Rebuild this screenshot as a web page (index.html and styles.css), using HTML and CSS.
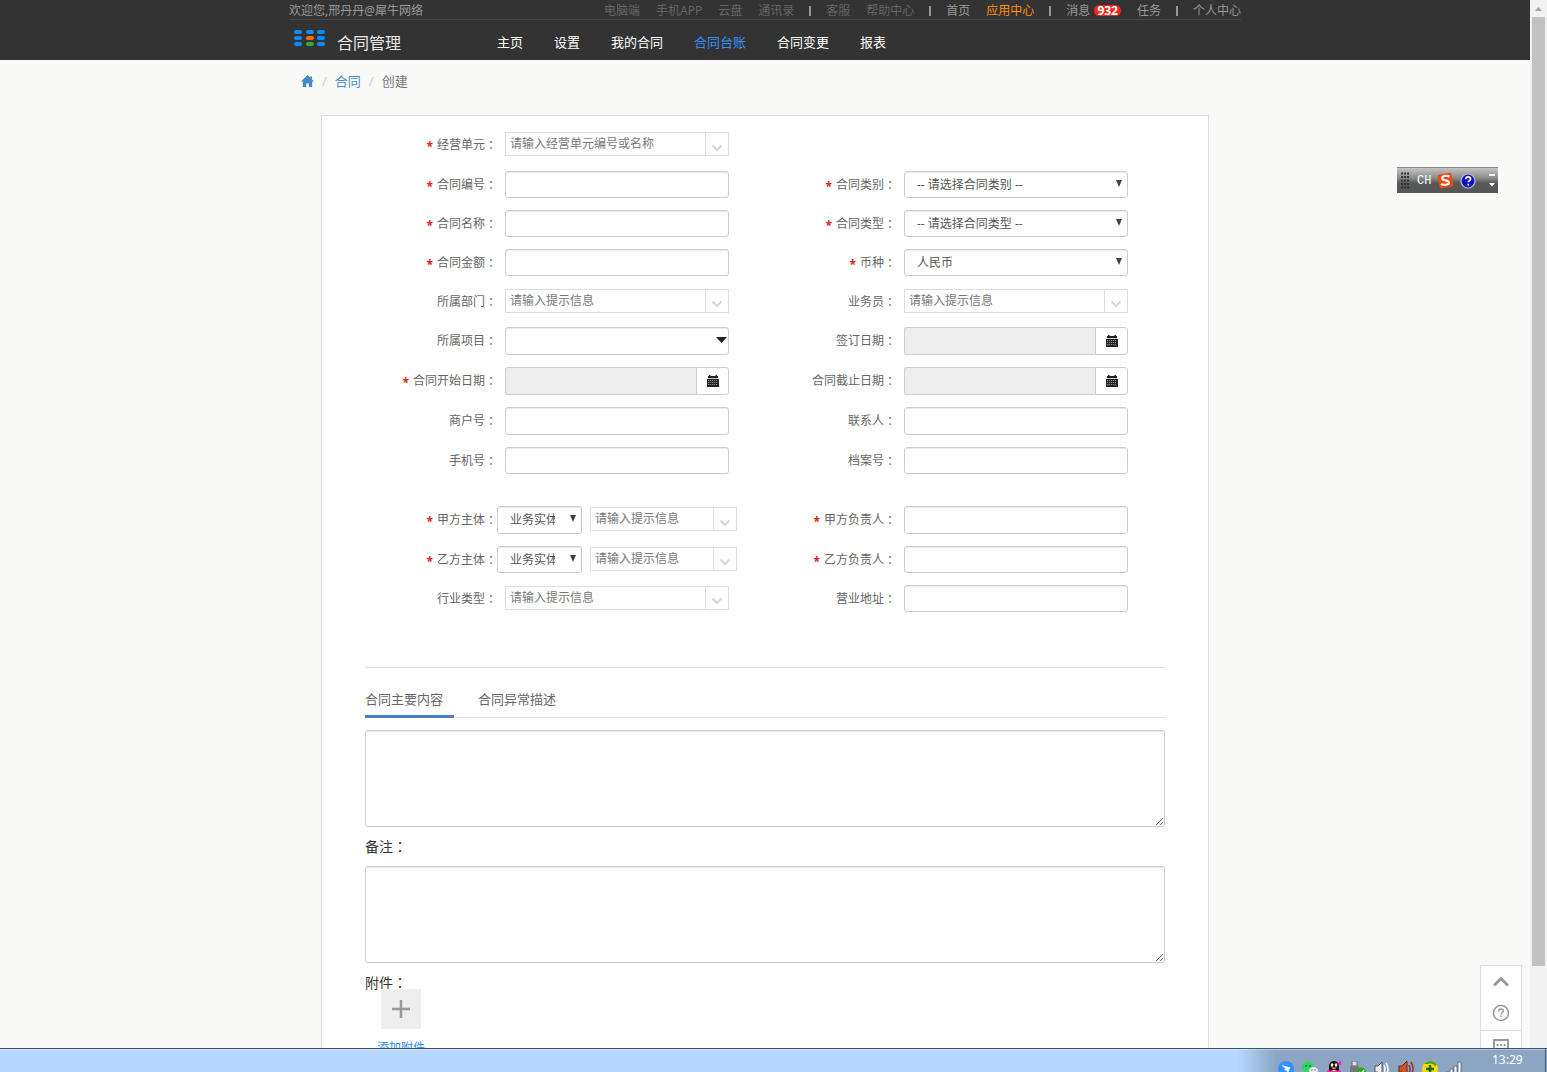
FILE: index.html
```html
<!DOCTYPE html>
<html lang="zh-CN">
<head>
<meta charset="utf-8">
<title>合同管理</title>
<link rel="stylesheet" href="styles.css">
</head>
<body>
<svg class="defs" aria-hidden="true">
  <symbol id="chevron" viewBox="0 0 12 8"><path d="M1.500 1.500 6 6l4.500-4.500" fill="none" stroke="#d5d5d5" stroke-width="2"/></symbol>
  <symbol id="calendar" viewBox="0 0 12 12"><path d="M1 1h1V0h1.500v1h5V0H10v1h1v2.300H1z" fill="#222"/><path d="M0 4h12v8H0z" fill="#222"/><path d="M1 5.500h10M1 7.500h10M1 9.500h10" stroke="#aaa" stroke-width=".8" stroke-dasharray="1.200 .8"/></symbol>
</svg>
<div class="window">
  <div class="page">
    <header class="header">
      <div class="topbar wrap">
        <span class="welcome">欢迎您,邢丹丹@犀牛网络</span>
        <div class="toplinks">
          <a class="dim" href="#">电脑端</a><a class="dim" href="#">手机APP</a><a class="dim" href="#">云盘</a><a class="dim" href="#">通讯录</a>
          <i class="bar"></i>
          <a class="dim" href="#">客服</a><a class="dim" href="#">帮助中心</a>
          <i class="bar"></i>
          <a href="#">首页</a><a class="hot" href="#">应用中心</a>
          <i class="bar"></i>
          <a class="messages" href="#">消息<span class="badge">932</span></a><a href="#">任务</a>
          <i class="bar"></i>
          <a href="#">个人中心</a>
        </div>
      </div>
      <div class="mainbar wrap">
        <a class="brand" href="#">
          <svg width="32" height="17" viewBox="0 0 32 17" fill="#0a8cff">
            <rect x="0" y="0" width="8" height="4" rx="2"/><rect x="12" y="0" width="8" height="4" rx="2"/><rect x="23" y="0" width="8" height="4" rx="2"/>
            <rect x="0" y="6" width="8" height="4" rx="2"/><rect x="12" y="6" width="8" height="4" rx="2" fill="#ff6a00"/><rect x="23" y="6" width="8" height="4" rx="2"/>
            <rect x="0" y="12" width="8" height="4" rx="2"/><rect x="12" y="12" width="8" height="4" rx="2" fill="#2fae3a"/><rect x="23" y="12" width="8" height="4" rx="2"/>
          </svg>
          <span>合同管理</span>
        </a>
        <nav class="nav">
          <a href="#">主页</a><a href="#">设置</a><a href="#">我的合同</a><a class="current" href="#">合同台账</a><a href="#">合同变更</a><a href="#">报表</a>
        </nav>
      </div>
    </header>

    <nav class="crumbs wrap" aria-label="路径">
      <a href="#" aria-label="首页"><svg width="13" height="12" viewBox="0 0 13 12"><path d="M6.500 0 0 6.500h1.800V12h3.400V8.500h2.600V12h3.400V6.500H13L11 4.500V1.500H9.300v1.300z" fill="#428bca"/></svg></a>
      <i>/</i><a href="#">合同</a><i>/</i><span>创建</span>
    </nav>

    <form class="panel">
      <div class="row tall">
        <label for="unit"><b>*</b>经营单元<span class="colon">：</span></label>
        <div class="field combo"><input id="unit" placeholder="请输入经营单元编号或名称"><button type="button" aria-label="展开"><svg width="12" height="8"><use href="#chevron"/></svg></button></div>
      </div>
      <div class="row">
        <label for="no"><b>*</b>合同编号<span class="colon">：</span></label>
        <div class="field"><input class="text" id="no"></div>
        <label for="cat"><b>*</b>合同类别<span class="colon">：</span></label>
        <div class="field select"><select id="cat"><option>-- 请选择合同类别 --</option></select></div>
      </div>
      <div class="row">
        <label for="name"><b>*</b>合同名称<span class="colon">：</span></label>
        <div class="field"><input class="text" id="name"></div>
        <label for="type"><b>*</b>合同类型<span class="colon">：</span></label>
        <div class="field select"><select id="type"><option>-- 请选择合同类型 --</option></select></div>
      </div>
      <div class="row">
        <label for="amount"><b>*</b>合同金额<span class="colon">：</span></label>
        <div class="field"><input class="text" id="amount"></div>
        <label for="currency"><b>*</b>币种<span class="colon">：</span></label>
        <div class="field select"><select id="currency"><option>人民币</option></select></div>
      </div>
      <div class="row">
        <label for="dept">所属部门<span class="colon">：</span></label>
        <div class="field combo"><input id="dept" placeholder="请输入提示信息"><button type="button" aria-label="展开"><svg width="12" height="8"><use href="#chevron"/></svg></button></div>
        <label for="sales">业务员<span class="colon">：</span></label>
        <div class="field combo"><input id="sales" placeholder="请输入提示信息"><button type="button" aria-label="展开"><svg width="12" height="8"><use href="#chevron"/></svg></button></div>
      </div>
      <div class="row tall">
        <label for="project">所属项目<span class="colon">：</span></label>
        <div class="field select wide"><select id="project"><option></option></select></div>
        <label for="sign">签订日期<span class="colon">：</span></label>
        <div class="field date"><input id="sign" readonly><button type="button" aria-label="选择日期"><svg width="12" height="12"><use href="#calendar"/></svg></button></div>
      </div>
      <div class="row tall">
        <label for="start"><b>*</b>合同开始日期<span class="colon">：</span></label>
        <div class="field date"><input id="start" readonly><button type="button" aria-label="选择日期"><svg width="12" height="12"><use href="#calendar"/></svg></button></div>
        <label for="end">合同截止日期<span class="colon">：</span></label>
        <div class="field date"><input id="end" readonly><button type="button" aria-label="选择日期"><svg width="12" height="12"><use href="#calendar"/></svg></button></div>
      </div>
      <div class="row tall">
        <label for="merchant">商户号<span class="colon">：</span></label>
        <div class="field"><input class="text" id="merchant"></div>
        <label for="contact">联系人<span class="colon">：</span></label>
        <div class="field"><input class="text" id="contact"></div>
      </div>
      <div class="row">
        <label for="mobile">手机号<span class="colon">：</span></label>
        <div class="field"><input class="text" id="mobile"></div>
        <label for="file">档案号<span class="colon">：</span></label>
        <div class="field"><input class="text" id="file"></div>
      </div>

      <div class="row tall parties">
        <label for="pa"><b>*</b>甲方主体<span class="colon">：</span></label>
        <div class="pair">
          <div class="select"><select aria-label="甲方类别"><option>业务实体</option></select></div>
          <div class="combo"><input id="pa" placeholder="请输入提示信息"><button type="button" aria-label="展开"><svg width="12" height="8"><use href="#chevron"/></svg></button></div>
        </div>
        <label for="pam"><b>*</b>甲方负责人<span class="colon">：</span></label>
        <div class="field"><input class="text" id="pam"></div>
      </div>
      <div class="row">
        <label for="pb"><b>*</b>乙方主体<span class="colon">：</span></label>
        <div class="pair">
          <div class="select"><select aria-label="乙方类别"><option>业务实体</option></select></div>
          <div class="combo"><input id="pb" placeholder="请输入提示信息"><button type="button" aria-label="展开"><svg width="12" height="8"><use href="#chevron"/></svg></button></div>
        </div>
        <label for="pbm"><b>*</b>乙方负责人<span class="colon">：</span></label>
        <div class="field"><input class="text" id="pbm"></div>
      </div>
      <div class="row">
        <label for="industry">行业类型<span class="colon">：</span></label>
        <div class="field combo"><input id="industry" placeholder="请输入提示信息"><button type="button" aria-label="展开"><svg width="12" height="8"><use href="#chevron"/></svg></button></div>
        <label for="addr">营业地址<span class="colon">：</span></label>
        <div class="field"><input class="text" id="addr"></div>
      </div>

      <section class="details">
        <div class="tabs">
          <button type="button" class="tab on">合同主要内容</button>
          <button type="button" class="tab">合同异常描述</button>
        </div>
        <textarea aria-label="合同主要内容"></textarea>
        <label class="heading" for="remark">备注<span class="colon">：</span></label>
        <textarea id="remark"></textarea>
        <p class="heading files">附件<span class="colon">：</span></p>
        <div class="upload">
          <button type="button" aria-label="添加"><svg width="20" height="20" viewBox="0 0 20 20"><path d="M10 1v18M1 10h18" stroke="#999" stroke-width="2.500"/></svg></button>
          <a href="#">添加附件</a>
        </div>
      </section>
    </form>
  </div>

  <div class="scrollbar" aria-hidden="true">
    <svg width="17" height="17" viewBox="0 0 17 17"><path d="M5 11h7L8.500 7z" fill="#a3a3a3"/></svg>
    <div class="thumb"></div>
  </div>
</div>

<div class="ime">
  <svg width="10" height="18" viewBox="0 0 10 18"><path d="M1 1.500h8M1 5h8M1 8.500h8M1 12h8M1 15.500h8" stroke="#333" stroke-width="2" stroke-dasharray="2 1"/></svg>
  <span>CH</span>
  <svg width="17" height="17" viewBox="0 0 17 17"><rect x="1.500" y="1.500" width="14" height="14" rx="2" fill="#f4470f" transform="rotate(-10 8.500 8.500)"/><path d="M12.500 4.500C9 3 5 4 5 6.200 5 8.800 12 7.800 12 10.600c0 2.500-5 2.800-8 1.500" fill="none" stroke="#fff" stroke-width="2.200"/></svg>
  <svg width="16" height="16" viewBox="0 0 16 16"><circle cx="8" cy="8" r="7" fill="#1212c8" stroke="#b9bcc8" stroke-width="1.200"/><path d="M5.700 6.200C5.700 3 10.500 3.200 10.500 6c0 1.700-2.300 1.700-2.300 3.300M8.200 10.700v1.800" fill="none" stroke="#fff" stroke-width="1.700"/></svg>
  <svg width="6" height="13" viewBox="0 0 6 13" fill="#fff"><path d="M0 0h6v2H0zM0 9h6l-3 3.500z"/></svg>
</div>

<div class="float">
  <button type="button" aria-label="返回顶部"><svg width="16" height="11" viewBox="0 0 16 11"><path d="M1 9.500 8 2.500l7 7" fill="none" stroke="#999" stroke-width="3"/></svg></button>
  <button type="button" aria-label="帮助"><svg width="18" height="18" viewBox="0 0 18 18" fill="none" stroke="#999"><circle cx="9" cy="9" r="7.500" stroke-width="1.500"/><path d="M6.500 7.500c0-3.500 5-3.200 5-.5 0 1.700-2.500 1.800-2.500 3.500M9 11.500V13" stroke-width="1.500"/></svg></button>
  <button type="button" class="chat" aria-label="反馈"><svg width="18" height="16" viewBox="0 0 18 16"><path d="M2 2h14v10H8l-3 3v-3H2z" fill="none" stroke="#999" stroke-width="2"/><path d="M4.500 7h2M8 7h2M11.500 7h2" stroke="#999" stroke-width="2"/></svg></button>
</div>

<footer class="taskbar">
  <div class="tray">
    <svg width="16" height="16" viewBox="0 0 16 16"><circle cx="8" cy="8" r="8" fill="#2f93ff"/><path d="M3.500 4 12.500 6.500 10 12 8.800 9.800 6 9l1.500-1z" fill="#fff"/></svg>
    <svg width="16" height="16" viewBox="0 0 16 16"><ellipse cx="6" cy="6" rx="6" ry="5.500" fill="#2fd566"/><path d="M2 9v4l4-2z" fill="#2fd566"/><circle cx="4" cy="5" r="1" fill="#186b34"/><circle cx="8" cy="5" r="1" fill="#186b34"/><ellipse cx="11.500" cy="10" rx="4.500" ry="4" fill="#e7efe9"/><circle cx="10" cy="9" r=".7" fill="#567"/><circle cx="13" cy="9" r=".7" fill="#567"/></svg>
    <svg width="16" height="16" viewBox="0 0 16 16"><path d="M3 9V5a5 5 0 0 1 10 0v4l2 4H1z" fill="#111"/><ellipse cx="6" cy="4" rx="1.300" ry="1.700" fill="#fff"/><ellipse cx="10" cy="4" rx="1.300" ry="1.700" fill="#fff"/><path d="M5 6.500h6L8 8.500z" fill="#ffae00"/><ellipse cx="8" cy="13" rx="4" ry="4" fill="#fff"/><path d="M2 8.500c4 2 8 2 12 0l1 2.500H1z" fill="#ff1db0"/><path d="m10 0 2 1 3-1v4l-3-1z" fill="#ff1dc0"/></svg>
    <svg width="16" height="16" viewBox="0 0 16 16"><path d="M2 0h5v5H2z" fill="#ddd" stroke="#666"/><path d="M0 5h9v11H0z" fill="#777"/><circle cx="11.500" cy="11" r="4.500" fill="#27a51f"/><path d="m9 11 2 2 3-4" fill="none" stroke="#fff" stroke-width="1.500"/></svg>
    <svg width="16" height="16" viewBox="0 0 16 16"><path d="M1 5h3l4-4v14l-4-4H1z" fill="#eee" stroke="#555"/><path d="M10 4q2 4 0 8M12 2q4 6 0 12" fill="none" stroke="#fff" stroke-width="1.500"/></svg>
    <svg width="16" height="16" viewBox="0 0 16 16"><path d="M1 5h3l5-5v15l-5-4H1z" fill="#d0532d" stroke="#6d2a1a"/><path d="M11 4q2 4 0 8M13 1q4 6 0 13" fill="none" stroke="#8f3326" stroke-width="1.500"/></svg>
    <svg width="16" height="16" viewBox="0 0 16 16"><circle cx="8" cy="8" r="8" fill="#ffd800"/><path d="M2 3a8 8 0 0 1 13 1L13 5a6 6 0 0 0-7-2z" fill="#43a62b"/><path d="M8 4v8M4 8h8" stroke="#176b1c" stroke-width="2.500"/></svg>
    <svg width="16" height="16" viewBox="0 0 16 16" fill="#fff" stroke="#4b5b6c" stroke-width=".8"><path d="M0 11h3v5H0zM4 8h3v8H4zM8 5h3v11H8zM12 1h3v15h-3z"/></svg>
  </div>
  <time>13:29</time>
  <button type="button" class="peek" aria-label="显示桌面"></button>
</footer>
</body>
</html>
```
FILE: styles.css
```css
* { box-sizing: border-box; }

body {
  margin: 0;
  height: 100vh;
  overflow: hidden;
  background: #f9f9f7;
  color: #666;
  font: 12px/18px "Noto Sans", "Noto Sans CJK SC", sans-serif;
}

a { color: inherit; text-decoration: none; }
i { font-style: normal; }
svg { display: block; flex: none; }
button, input, select, textarea { font: inherit; color: inherit; margin: 0; outline: none; }
button { padding: 0; border: 0; background: none; }
.defs { display: none; }

.window { display: flex; height: 100%; }
.page { flex: 1; min-width: 0; overflow: hidden; }
.wrap { width: 100%; max-width: 952px; margin: 0 auto; }

/* header */
.header { height: 60px; background: #333; }
.topbar {
  display: flex;
  justify-content: space-between;
  height: 20px;
  padding-top: 2px;
  border-bottom: 1px solid #484848;
  color: #999;
}
.toplinks { display: flex; align-items: center; gap: 16px; }
.toplinks .dim { color: #666; }
.toplinks .hot { color: #ff8f0e; }
.bar { width: 2px; height: 10px; margin: 0 -1px; background: #999; }
.messages { display: flex; align-items: center; gap: 4px; }
.badge {
  height: 11px;
  padding: 0 3px;
  border-radius: 6px;
  background: #f0281c;
  color: #fff;
  font-weight: bold;
  line-height: 11px;
}
.mainbar { display: flex; align-items: center; height: 40px; padding: 3px 0 0 5px; }
.brand {
  display: flex;
  align-items: center;
  gap: 11px;
  width: 203px;
  color: #e8e8e8;
  font-size: 16px;
}
.brand svg { margin-bottom: 6px; }
.brand span { padding-top: 2px; }
.nav { display: flex; gap: 31px; color: #fff; font-size: 13px; }
.nav .current { color: #3a8ff5; }

/* breadcrumb */
.crumbs {
  display: flex;
  align-items: center;
  gap: 8px;
  height: 41px;
  padding-left: 12px;
  font-size: 13px;
  color: #777;
}
.crumbs a { color: #428bca; }
.crumbs i { color: #ccc; }

/* form */
.panel {
  width: 100%;
  max-width: 888px;
  min-height: 1000px;
  margin: 14px auto 0;
  padding-top: 9px;
  border: 1px solid #ddd;
  background: #fff;
}
.row {
  display: grid;
  grid-template-columns: 175px 240px 159px 240px;
  align-items: center;
  height: 39px;
}
.row.tall { height: 40px; }
.row label { display: flex; align-items: center; justify-content: flex-end; }
.row label b { padding: 4px 4px 0 0; color: #d9251c; font-size: 12px; line-height: 12px; }
.colon { font-family: "Noto Sans CJK TC", sans-serif; -webkit-locale: "zh-TW"; }
.parties { margin-top: 20px; }

.field { width: 224px; margin-left: 8px; }
.text, .select select {
  display: block;
  width: 100%;
  height: 27px;
  padding: 0 12px;
  border: 1px solid #ccc;
  border-radius: 3px;
  background: #fff;
  box-shadow: inset 0 1px 1px rgba(0, 0, 0, .08);
}
.tall .text, .tall select { height: 28px; }

.select { position: relative; }
.select select { padding: 0 26px 0 12px; appearance: none; color: #555; }
.select::after {
  content: "";
  position: absolute;
  right: 6px;
  top: 9px;
  width: 6px;
  height: 7px;
  background: #444;
  clip-path: polygon(0 0, 100% 0, 50% 100%);
  pointer-events: none;
}
.select.wide::after { right: 2px; top: 10px; width: 11px; height: 6px; background: #222; }

.combo { display: flex; height: 24px; margin-bottom: 2px; border: 1px solid #ddd; background: #fff; }
.combo input { flex: 1; min-width: 0; padding: 0 4px; border: 0; background: none; }
.combo input::placeholder { color: #777; opacity: 1; }
.combo button { width: 23px; padding: 7px 0 0 5px; border-left: 1px solid #ddd; }

.date { display: flex; height: 28px; }
.date input {
  flex: 1;
  min-width: 0;
  border: 1px solid #ccc;
  border-right: 0;
  border-radius: 3px 0 0 3px;
  background: #eee;
}
.date button {
  display: flex;
  align-items: center;
  justify-content: center;
  width: 33px;
  border: 1px solid #ccc;
  border-radius: 0 3px 3px 0;
}

.pair { display: grid; grid-template-columns: 85px 147px; gap: 8px; align-items: center; }

/* lower section */
.details { margin: 49px 43px 0; border-top: 1px solid #ddd; padding-top: 15px; }
.tabs { display: flex; gap: 24px; border-bottom: 1px solid #ddd; }
.tab {
  height: 35px;
  margin-bottom: -1px;
  padding: 0 11px 0 0;
  border-bottom: 3px solid transparent;
  font-size: 13px;
}
.tab.on { border-color: #4a80c4; }
textarea {
  display: block;
  width: 100%;
  height: 97px;
  border: 1px solid #ccc;
  border-radius: 3px;
  background: #fff;
  box-shadow: inset 0 1px 1px rgba(0, 0, 0, .08);
}
.tabs + textarea { margin-top: 12px; }
.heading { display: block; margin: 0; padding: 10px 0; color: #333; font-size: 14px; line-height: 19px; }
.heading.files { height: 26px; padding-bottom: 0; }
.upload { display: flex; flex-direction: column; align-items: center; gap: 10px; width: 72px; }
.upload button {
  display: flex;
  align-items: center;
  justify-content: center;
  width: 40px;
  height: 40px;
  background: #eee;
}
.upload a { color: #2e8ded; }

/* scrollbar */
.scrollbar { display: flex; flex-direction: column; width: 17px; padding-bottom: 106px; background: #f1f1f1; }
.thumb { flex: 1; margin: 0 2px; background: #c1c1c1; }

/* input method bar */
.ime {
  position: absolute;
  top: 167px;
  right: 49px;
  display: flex;
  align-items: center;
  gap: 6px;
  width: 101px;
  height: 26px;
  padding-left: 3px;
  border-top: 1px solid #888;
  background: linear-gradient(#c4c4c4, #8a8c8b 40%, #585a59 60%, #555756);
  color: #fff;
  font: 12px/18px "Liberation Mono", monospace;
}
.ime svg:last-child { margin-left: 7px; }
.ime span { padding-left: 1px; }

/* floating tools */
.float {
  position: absolute;
  top: 965px;
  right: 25px;
  width: 42px;
  border: 1px solid #ddd;
  background: #fff;
}
.float button { display: flex; align-items: center; justify-content: center; width: 40px; height: 32px; padding-bottom: 2px; }
.float .chat { height: 33px; border-top: 1px solid #ddd; }

/* taskbar */
.taskbar {
  position: absolute;
  left: 0;
  right: 0;
  bottom: 0;
  display: flex;
  justify-content: flex-end;
  height: 24px;
  overflow: hidden;
  border-top: 1px solid #3f5165;
  background: linear-gradient(to left, #8ba5c3 270px, #b7d8fd 310px);
  box-shadow: inset 0 1px 0 rgba(255, 255, 255, .4);
}
.tray { display: flex; gap: 8px; padding-top: 12px; }
.taskbar time { padding: 2px 0 0 30px; color: #fff; width: 83px; }
.peek { width: 2px; border-left: 1px solid #4b5f78; }
```
